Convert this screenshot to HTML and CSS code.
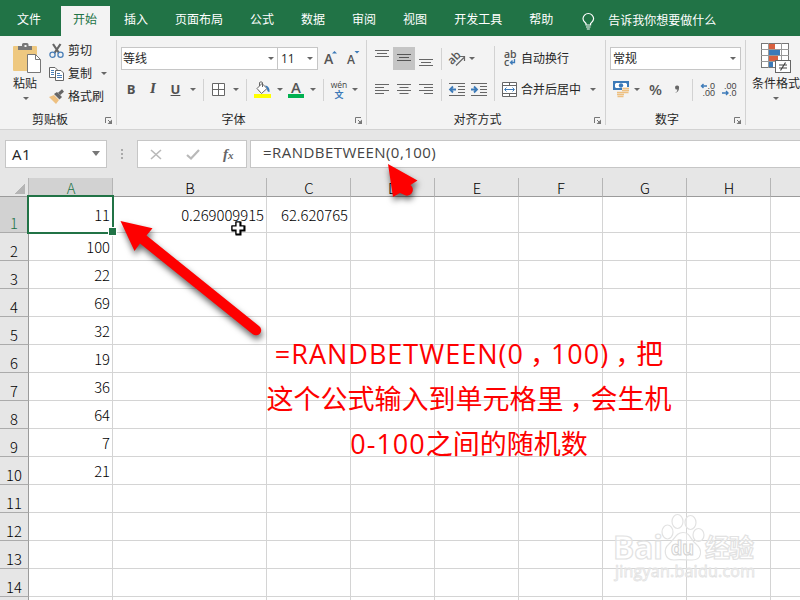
FILE: index.html
```html
<!DOCTYPE html>
<html lang="zh-CN">
<head>
    <meta charset="UTF-8">
    <meta name="viewport" content="width=device-width, initial-scale=1.0">
    <title>Excel RANDBETWEEN</title>
    <link rel="stylesheet" href="styles.css">
</head>
<body>
    <div class="window">
        <nav class="tabs">
            <a class="tab">文件</a>
            <a class="tab active">开始</a>
            <a class="tab">插入</a>
            <a class="tab">页面布局</a>
            <a class="tab">公式</a>
            <a class="tab">数据</a>
            <a class="tab">审阅</a>
            <a class="tab">视图</a>
            <a class="tab">开发工具</a>
            <a class="tab">帮助</a>
            <svg class="bulb" width="13" height="17" viewBox="0 0 13 17" fill="none" stroke="#fff" stroke-width="1.2">
                <path d="M4 12V10.500C2.500 9 1 8 1 5.800A5.200 5.200 0 0 1 11.600 5.800C11.600 8 10 9 8.600 10.500V12Z"/>
                <path d="M4 14H8.600M4.800 16H7.800"/>
            </svg>
            <span class="tell-me">告诉我你想要做什么</span>
        </nav>

        <div class="ribbon">
            <!-- Clipboard -->
            <section class="group clipboard">
                <div class="group-body">
                    <div class="big-button paste">
                        <svg width="29" height="31" viewBox="0 0 29 31">
                            <rect x="0" y="3" width="24" height="25" rx="1" fill="#eec880"/>
                            <path d="M5 7V3H9V1.500Q9 0 10.500 0H14Q15.500 0 15.500 1.500V3H19V7Z" fill="#777"/>
                            <rect x="11.500" y="2" width="2" height="2" fill="#f3f3f3"/>
                            <path d="M14.500 11.500H22.500L27.500 16.500V29.500H14.500Z" fill="#fff" stroke="#777"/>
                            <path d="M22.500 11.500V16.500H27.500" fill="none" stroke="#777"/>
                        </svg>
                        <span>粘贴</span>
                        <i class="caret"></i>
                    </div>
                    <div class="small-buttons">
                        <div class="small-button">
                            <svg width="16" height="16" viewBox="0 0 16 16" fill="none">
                                <path d="M4 1L10 10M11.500 1L5.500 10" stroke="#666" stroke-width="2.200"/>
                                <circle cx="3.500" cy="11.800" r="2.600" stroke="#4a7fb8" stroke-width="1.300"/>
                                <circle cx="11.500" cy="11.800" r="2.600" stroke="#4a7fb8" stroke-width="1.300"/>
                            </svg>
                            <span>剪切</span>
                        </div>
                        <div class="small-button">
                            <svg width="16" height="16" viewBox="0 0 16 16">
                                <path d="M.5 1.500H6L8.500 4V11.500H.5Z" fill="#fff" stroke="#666"/>
                                <path d="M2 4.500H5M2 6.500H5M2 8.500H5" stroke="#4a7fb8"/>
                                <path d="M6.500 4.500H12L14.500 7V14.500H6.500Z" fill="#fff" stroke="#666"/>
                                <path d="M8 7.500H11M8 9.500H13M8 11.500H13" stroke="#4a7fb8"/>
                            </svg>
                            <span>复制</span>
                            <i class="caret"></i>
                        </div>
                        <div class="small-button">
                            <svg width="16" height="16" viewBox="0 0 16 16">
                                <path d="M0 8L5 6L10 11L7 15Z" fill="#eec080"/>
                                <path d="M5 5L8 3L13 8L10.500 10.500Z" fill="#666"/>
                                <path d="M10 5L14 1.500" stroke="#666" stroke-width="3"/>
                            </svg>
                            <span>格式刷</span>
                        </div>
                    </div>
                </div>
                <div class="group-footer">
                    <span>剪贴板</span>
                    <svg class="launcher" width="8" height="8" viewBox="0 0 8 8"><path d="M.5 6V.5H6M3 3L6 6" fill="none" stroke="#777"/><path d="M7 2.500V7H2.500Z" fill="#777"/></svg>
                </div>
            </section>

            <!-- Font -->
            <section class="group font">
                <div class="group-body">
                    <div class="row">
                        <div class="combo font-name"><span>等线</span><i class="caret"></i></div>
                        <div class="combo font-size"><span>11</span><i class="caret"></i></div>
                        <svg class="grow" width="14" height="15" viewBox="0 0 14 15">
                            <text x="0" y="13.500" font-size="14" class="letter">A</text>
                            <path d="M8 3.500L10.500 1L13 3.500Z" fill="#3c7ab8"/>
                        </svg>
                        <svg class="shrink" width="14" height="15" viewBox="0 0 14 15">
                            <text x="0" y="13.500" font-size="12" class="letter">A</text>
                            <path d="M7.500 1H12.500L10 3.500Z" fill="#3c7ab8"/>
                        </svg>
                    </div>
                    <div class="font-tools">
                        <b class="fmt">B</b>
                        <b class="fmt italic">I</b>
                        <b class="fmt underline">U</b>
                        <i class="caret"></i>
                        <i class="sep"></i>
                        <svg width="13" height="13" viewBox="0 0 13 13"><path d="M.5 .5H12.500V12.500H.5ZM6.500 .5V12.500M.5 6.500H12.500" fill="#fff" stroke="#666"/></svg>
                        <i class="caret"></i>
                        <i class="sep"></i>
                        <svg width="17" height="17" viewBox="0 0 17 17">
                            <path d="M3 7.500L8 2.500L13 7.500L7.500 12.500Z" fill="#fff" stroke="#666"/>
                            <path d="M5.500 5V1.500Q7 0 8.500 1.500V6" fill="none" stroke="#666"/>
                            <path d="M11 4.500Q16 5 15.500 11Q13 11 13 7.500Z" fill="#3c7ab8"/>
                            <rect x="0" y="13" width="17" height="4" fill="#ff0"/>
                        </svg>
                        <i class="caret"></i>
                        <svg width="16" height="17" viewBox="0 0 16 17">
                            <text x="8" y="12" font-size="15" text-anchor="middle" class="letter">A</text>
                            <rect x="0" y="13" width="16" height="4" fill="#00b050"/>
                        </svg>
                        <i class="caret"></i>
                        <i class="sep"></i>
                        <svg width="18" height="20" viewBox="0 0 18 20">
                            <text x="9" y="8" font-size="8.500" text-anchor="middle" fill="#444">wén</text>
                            <text x="9" y="18" font-size="9" text-anchor="middle" class="blue">文</text>
                        </svg>
                        <i class="caret"></i>
                    </div>
                </div>
                <div class="group-footer">
                    <span>字体</span>
                    <svg class="launcher" width="8" height="8" viewBox="0 0 8 8"><path d="M.5 6V.5H6M3 3L6 6" fill="none" stroke="#777"/><path d="M7 2.500V7H2.500Z" fill="#777"/></svg>
                </div>
            </section>

            <!-- Alignment -->
            <section class="group alignment">
                <div class="group-body">
                    <div class="align-tools">
                        <svg width="14" height="23" viewBox="0 0 14 23"><path d="M0 3.500H14M2 6.500H12M0 9.500H14" stroke="#666"/></svg>
                        <div class="pressed"><svg width="14" height="23" viewBox="0 0 14 23"><path d="M0 7.500H14M2 10.500H12M0 13.500H14" stroke="#555"/></svg></div>
                        <svg width="14" height="23" viewBox="0 0 14 23"><path d="M0 12.500H14M2 15.500H12M0 18.500H14" stroke="#666"/></svg>
                        <i class="sep"></i>
                        <svg width="17" height="17" viewBox="0 0 17 17">
                            <text x="-1" y="12" font-size="11.500" class="letter" transform="rotate(-45 5 9)">ab</text>
                            <path d="M7 15.500L15 7.500M11 6.500H15.500V11" fill="none" stroke="#666" stroke-width="1.200"/>
                        </svg>
                        <i class="caret orient-caret"></i>

                        <svg width="14" height="14" viewBox="0 0 14 14"><path d="M0 1.500H14M0 4.500H9M0 7.500H14M0 10.500H9" stroke="#666"/></svg>
                        <svg width="14" height="14" viewBox="0 0 14 14"><path d="M0 1.500H14M2.500 4.500H11.500M0 7.500H14M2.500 10.500H11.500" stroke="#666"/></svg>
                        <svg width="14" height="14" viewBox="0 0 14 14"><path d="M0 1.500H14M5 4.500H14M0 7.500H14M5 10.500H14" stroke="#666"/></svg>
                        <i class="sep"></i>
                        <svg width="16" height="14" viewBox="0 0 16 14"><path d="M0 .5H16M9 3.500H16M9 6.500H16M9 9.500H16M0 12.500H16" stroke="#666"/><path d="M7 6.500H2M4 3.500L1 6.500L4 9.500" fill="none" stroke="#3c7ab8" stroke-width="1.800"/></svg>
                        <svg width="16" height="14" viewBox="0 0 16 14"><path d="M0 .5H16M9 3.500H16M9 6.500H16M9 9.500H16M0 12.500H16" stroke="#666"/><path d="M0 6.500H5M3 3.500L6 6.500L3 9.500" fill="none" stroke="#3c7ab8" stroke-width="1.800"/></svg>
                    </div>
                    <i class="sep tall"></i>
                    <div class="wrap-tools">
                        <div class="small-button">
                            <svg width="16" height="17" viewBox="0 0 16 17">
                                <text x="2" y="8" font-size="10.500" class="letter">ab</text>
                                <text x="2" y="16" font-size="10.500" class="letter">c</text>
                                <path d="M12.500 9V12.500H9M10.500 10.500L8.500 12.500L10.500 14.500" fill="none" stroke="#3c7ab8" stroke-width="1.300"/>
                            </svg>
                            <span>自动换行</span>
                        </div>
                        <div class="small-button">
                            <svg width="16" height="15" viewBox="0 0 16 15">
                                <path d="M.5 .5H14.500V14.500H.5ZM7.500 .5V3.500M7.500 11.500V14.500M.5 3.500H14.500M.5 11.500H14.500" fill="#fff" stroke="#666"/>
                                <path d="M3 7.500H12M4.500 5.500L2.500 7.500L4.500 9.500M10.500 5.500L12.500 7.500L10.500 9.500" fill="none" stroke="#3c7ab8"/>
                            </svg>
                            <span>合并后居中</span>
                            <i class="caret"></i>
                        </div>
                    </div>
                </div>
                <div class="group-footer">
                    <span>对齐方式</span>
                    <svg class="launcher" width="8" height="8" viewBox="0 0 8 8"><path d="M.5 6V.5H6M3 3L6 6" fill="none" stroke="#777"/><path d="M7 2.500V7H2.500Z" fill="#777"/></svg>
                </div>
            </section>

            <!-- Number -->
            <section class="group number">
                <div class="group-body">
                    <div class="combo"><span>常规</span><i class="caret"></i></div>
                    <div class="number-tools">
                        <svg width="17" height="17" viewBox="0 0 17 17">
                            <path d="M1 1H15V8H1Z" fill="#fff" stroke="#3c7ab8" stroke-width="2"/>
                            <path d="M1 1H4L1 4ZM15 1H12L15 4ZM1 8H4L1 5Z" fill="#3c7ab8"/>
                            <circle cx="8" cy="4.500" r="2.200" fill="#3c7ab8"/>
                            <path d="M9 7.500H16M9 9.500H16M9 11.500H16M4 11.500H10M4 13.500H11M4 15.500H11" stroke="#f3f3f3" stroke-width="3"/>
                            <path d="M9.500 7.500H16M9 9.500H16M9 11.500H15.500M4 11.500H10M4 13.500H11M4.500 15.500H10.500" stroke="#eec080" stroke-width="1.400"/>
                        </svg>
                        <i class="caret"></i>
                        <span class="percent">%</span>
                        <svg width="6" height="9" viewBox="0 0 6 9"><path d="M1 8Q3.500 6.500 3.500 4.500A2 2 0 1 1 5 3Q5 7 1 8Z" fill="#666"/></svg>
                        <i class="sep"></i>
                        <svg width="16" height="15" viewBox="0 0 16 15">
                            <text x="15" y="7" font-size="9" text-anchor="end" class="digits">.0</text>
                            <text x="15" y="14" font-size="9" text-anchor="end" class="digits">.00</text>
                            <path d="M7 4H1.500M3.500 2L1.500 4L3.500 6" fill="none" stroke="#3c7ab8" stroke-width="1.400"/>
                        </svg>
                        <svg width="16" height="15" viewBox="0 0 16 15">
                            <text x="15.500" y="7" font-size="9" text-anchor="end" class="digits">.00</text>
                            <text x="15.500" y="14" font-size="9" text-anchor="end" class="digits">.0</text>
                            <path d="M1 11H7M5 9L7 11L5 13" fill="none" stroke="#3c7ab8" stroke-width="1.400"/>
                        </svg>
                    </div>
                </div>
                <div class="group-footer">
                    <span>数字</span>
                    <svg class="launcher" width="8" height="8" viewBox="0 0 8 8"><path d="M.5 6V.5H6M3 3L6 6" fill="none" stroke="#777"/><path d="M7 2.500V7H2.500Z" fill="#777"/></svg>
                </div>
            </section>

            <!-- Styles -->
            <section class="group styles">
                <div class="group-body">
                    <div class="big-button">
                        <svg width="30" height="31" viewBox="0 0 30 31">
                            <rect x=".5" y=".5" width="27" height="24" fill="#fff" stroke="#777"/>
                            <path d="M7.500 0V25M20.500 0V25M0 6.500H28M0 12.500H28M0 18.500H28" stroke="#999"/>
                            <rect x="8" y="1" width="6" height="5" fill="#d9603f"/>
                            <rect x="8" y="7" width="11" height="5" fill="#3c7ab8"/>
                            <rect x="8" y="13" width="9" height="5" fill="#d9603f"/>
                            <rect x="8" y="19" width="4" height="5" fill="#3c7ab8"/>
                            <rect x="14.500" y="17.500" width="15" height="12" fill="#fff" stroke="#666"/>
                            <path d="M18 22H26M18 25H26M24.500 19.500L19.500 27.500" stroke="#444" stroke-width="1.200"/>
                        </svg>
                        <span>条件格式</span>
                        <i class="caret"></i>
                    </div>
                </div>
            </section>
        </div>

        <div class="formula-bar">
            <div class="name-box"><span>A1</span><i class="caret"></i></div>
            <svg class="dots" width="2" height="11" viewBox="0 0 2 11" fill="#aaa"><path d="M0 0H2V2H0ZM0 4H2V6H0ZM0 8H2V10H0Z"/></svg>
            <div class="fx-buttons">
                <svg width="12" height="11" viewBox="0 0 12 11"><path d="M1 1L11 10M11 1L1 10" stroke="#b9b9b9" stroke-width="1.600"/></svg>
                <svg width="14" height="11" viewBox="0 0 14 11"><path d="M1 6L5 9.500L13 1" fill="none" stroke="#b9b9b9" stroke-width="2.200"/></svg>
                <span class="fx">f<small>x</small></span>
            </div>
            <div class="formula">=RANDBETWEEN(0,100)</div>
        </div>

        <div class="sheet">
            <table>
                <colgroup>
                    <col class="col-head"><col class="col"><col class="col-wide">
                    <col class="col"><col class="col"><col class="col"><col class="col"><col class="col"><col class="col"><col class="col">
                </colgroup>
                <thead>
                    <tr><th class="corner"></th><th class="selected">A</th><th>B</th><th>C</th><th>D</th><th>E</th><th>F</th><th>G</th><th>H</th><th></th></tr>
                </thead>
                <tbody>
                    <tr class="first"><th class="selected">1</th><td>11</td><td>0.269009915</td><td>62.620765</td><td></td><td></td><td></td><td></td><td></td><td></td></tr>
                    <tr><th>2</th><td>100</td><td></td><td></td><td></td><td></td><td></td><td></td><td></td><td></td></tr>
                    <tr><th>3</th><td>22</td><td></td><td></td><td></td><td></td><td></td><td></td><td></td><td></td></tr>
                    <tr><th>4</th><td>69</td><td></td><td></td><td></td><td></td><td></td><td></td><td></td><td></td></tr>
                    <tr><th>5</th><td>32</td><td></td><td></td><td></td><td></td><td></td><td></td><td></td><td></td></tr>
                    <tr><th>6</th><td>19</td><td></td><td></td><td></td><td></td><td></td><td></td><td></td><td></td></tr>
                    <tr><th>7</th><td>36</td><td></td><td></td><td></td><td></td><td></td><td></td><td></td><td></td></tr>
                    <tr><th>8</th><td>64</td><td></td><td></td><td></td><td></td><td></td><td></td><td></td><td></td></tr>
                    <tr><th>9</th><td>7</td><td></td><td></td><td></td><td></td><td></td><td></td><td></td><td></td></tr>
                    <tr><th>10</th><td>21</td><td></td><td></td><td></td><td></td><td></td><td></td><td></td><td></td></tr>
                    <tr><th>11</th><td></td><td></td><td></td><td></td><td></td><td></td><td></td><td></td><td></td></tr>
                    <tr><th>12</th><td></td><td></td><td></td><td></td><td></td><td></td><td></td><td></td><td></td></tr>
                    <tr><th>13</th><td></td><td></td><td></td><td></td><td></td><td></td><td></td><td></td><td></td></tr>
                    <tr><th>14</th><td></td><td></td><td></td><td></td><td></td><td></td><td></td><td></td><td></td></tr>
                    <tr><th></th><td></td><td></td><td></td><td></td><td></td><td></td><td></td><td></td><td></td></tr>
                </tbody>
            </table>
            <div class="selection"></div>
        </div>

        <!-- arrows, mouse cursor and watermark lie over the sheet -->
        <svg class="overlay" width="800" height="600" viewBox="0 0 800 600">
            <g class="arrow">
                <path d="M120.500 221L152.500 228.300L146.500 235.500L259.300 326.200A5 5 0 0 1 252.800 334.200L140 243.500L134.500 251Z"/>
                <path d="M388 164L417.500 180.500L410.500 185A5.300 5.300 0 0 1 403.500 194.500L400 193L393 197Z"/>
            </g>
            <path d="M235.500 221.500H241.500V225.500H245.500V231.500H241.500V235.500H235.500V231.500H231.500V225.500H235.500Z" fill="#000"/>
            <path d="M236 222H240V226H244V230H240V234H236V230H232V226H236Z" fill="#fff" stroke="#000" stroke-width="1.200"/>
            <g class="watermark">
                <ellipse cx="667.500" cy="532" rx="5.500" ry="7"/>
                <ellipse cx="677.500" cy="521.500" rx="5.500" ry="7"/>
                <ellipse cx="690.500" cy="522.500" rx="5.500" ry="7"/>
                <ellipse cx="698.500" cy="535" rx="5.500" ry="6.500"/>
                <path d="M683 532.500C690 532.500 690 539 696 544C703 550 702 560 692 560C687 560 679 559 674 560C664 560 663 549 669 544C675 539 676 532.500 683 532.500Z"/>
                <text x="613" y="559" class="wm-baidu" textLength="50" lengthAdjust="spacingAndGlyphs">Bai</text>
                <text x="671" y="555" class="wm-du" textLength="23" lengthAdjust="spacingAndGlyphs">du</text>
                <text x="705" y="557" class="wm-cjk" textLength="49">经验</text>
                <text x="615" y="577" class="wm-url" textLength="140">jingyan.baidu.com</text>
            </g>
        </svg>

        <div class="note">
            <p><span>=RANDBETWEEN(0</span><i>，</i><span>100)</span><i>，</i>把</p>
            <p>这个公式输入到单元格里<i>，</i>会生机</p>
            <p><span>0-100</span>之间的随机数</p>
        </div>
    </div>
</body>
</html>
```

FILE: styles.css
```css
* {
    box-sizing: border-box;
}

body {
    margin: 0;
    width: 800px;
    height: 600px;
    overflow: hidden;
    font-family: "Open Sans", "Noto Sans CJK SC", sans-serif;
    font-size: 12px;
    line-height: 16px;
    color: #262626;
}

svg {
    display: block;
    flex: none;
    overflow: visible;
}

.window {
    position: relative;
    width: 800px;
    height: 600px;
    overflow: hidden;
    background: #e6e6e6;
}

/* tabs */
.tabs {
    display: flex;
    height: 36px;
    padding: 6px 0 0 4px;
    background: #217346;
    color: #fff;
}

.tab {
    padding: 6px 13px 0;
    white-space: nowrap;
}

.tab:first-child {
    padding-right: 20px;
}

.tab.active {
    padding: 6px 13px 0 12px;
    background: #f3f3f3;
    color: #217346;
}

.tab.active + .tab {
    padding-left: 14px;
}

.tab + .tab:nth-child(n + 4) {
    padding-left: 14px;
}

.bulb {
    margin: 7px 0 0 16px;
}

.tell-me {
    margin: 7px 0 0 13px;
    white-space: nowrap;
}

/* ribbon */
.ribbon {
    display: flex;
    height: 94px;
    background: #f3f3f3;
    border-bottom: 1px solid #d2d2d2;
}

.group {
    position: relative;
    display: flex;
    flex-direction: column;
    flex: none;
    height: 93px;
    padding-top: 11px;
}

.group::after {
    content: "";
    position: absolute;
    right: 0;
    top: 4px;
    bottom: 4px;
    width: 1px;
    background: #d2d2d2;
}

.group-body {
    flex: none;
    height: 64px;
}

.group-footer {
    display: flex;
    flex: none;
    align-items: center;
    height: 18px;
    padding-right: 4px;
    text-align: center;
}

.group-footer span {
    flex: 1;
    padding-right: 5px;
}

.launcher {
    margin-top: 2px;
}

.clipboard {
    width: 117px;
}

.clipboard .group-body {
    display: flex;
}

.font {
    width: 250px;
    padding-left: 4px;
}

.font .group-footer span {
    padding-right: 9px;
}

.alignment {
    width: 239px;
    padding-left: 4px;
}

.alignment .group-body {
    display: flex;
}

.alignment .group-footer span,
.number .group-footer span {
    padding-right: 10px;
}

.number {
    width: 140px;
    padding-left: 4px;
}

.styles {
    width: 66px;
}

.styles::after {
    display: none;
}

.caret {
    flex: none;
    width: 0;
    height: 0;
    border: 3px solid transparent;
    border-top-color: #666;
    border-bottom: 0;
}

.sep {
    width: 1px;
    height: 22px;
    background: #d2d2d2;
}

.sep.tall {
    height: 55px;
    margin: -1px 7px 0 4px;
}

.big-button {
    display: flex;
    flex-direction: column;
    align-items: center;
    width: 60px;
    margin-top: -4px;
    white-space: nowrap;
}

.big-button span {
    margin: 2px 0 5px;
}

.paste {
    width: 26px;
    margin-left: 12px;
}

.paste svg {
    margin-left: 4px;
}

.paste .caret {
    margin-left: 2px;
}

.small-buttons {
    margin: -8px 0 0 11px;
}

.small-button {
    display: flex;
    align-items: center;
    height: 23px;
    white-space: nowrap;
}

.small-button svg {
    margin-right: 3px;
}

.small-button .caret {
    margin-left: 9px;
}

.row {
    display: flex;
}

.combo {
    display: flex;
    align-items: center;
    justify-content: space-between;
    height: 23px;
    padding: 0 3px 0 1px;
    background: #fff;
    border: 1px solid #c6c6c6;
}

.font-name {
    width: 157px;
}

.font-size {
    width: 41px;
    margin-left: -1px;
    padding-right: 4px;
    padding-left: 3px;
}

.grow {
    margin: 3px 0 0 6px;
}

.shrink {
    margin: 3px 0 0 9px;
}

.letter {
    fill: #555;
    font-weight: 600;
}

.digits {
    fill: #444;
    font-family: "Liberation Sans", sans-serif;
}

.blue {
    fill: #3c7ab8;
    font-weight: bold;
}

.font-tools,
.number-tools {
    display: grid;
    align-items: center;
    justify-items: center;
    height: 23px;
    margin-top: 8px;
}

.font-tools {
    grid-template-columns: 20px 24px 21px 13px 9px 21px 13px 9px 23px 11px 22px 11px 11px 20px 12px;
}

.fmt {
    margin-top: -2px;
    font-size: 13px;
    line-height: 18px;
    color: #505050;
}

.italic {
    font-family: "DejaVu Serif", serif;
    font-size: 12px;
    font-style: italic;
    font-weight: bold;
}

.underline {
    text-decoration: underline;
}

.align-tools {
    display: grid;
    grid-template-columns: 22px 22px 22px 9px 22px 22px;
    grid-template-rows: 23px 23px;
    row-gap: 8px;
    align-items: center;
    justify-items: center;
    height: 54px;
}

.pressed {
    display: flex;
    justify-content: center;
    width: 22px;
    height: 23px;
    background: #c5c5c5;
}

.orient-caret {
    justify-self: start;
    margin-left: 1px;
}

.wrap-tools {
    display: flex;
    flex-direction: column;
    gap: 8px;
}

.number .combo {
    width: 131px;
    padding-left: 2px;
}

.number .caret {
    margin-right: 1px;
}

.number-tools {
    grid-template-columns: 22px 10px 27px 15px 16px 15px 27px;
}

.percent {
    margin-top: -2px;
    font-size: 15px;
    font-weight: 600;
    color: #555;
}

/* formula bar */
.formula-bar {
    display: flex;
    align-items: center;
    height: 48px;
    padding-left: 5px;
}

.name-box,
.fx-buttons,
.formula {
    display: flex;
    align-items: center;
    height: 28px;
    background: #fff;
    border: 1px solid #c6c6c6;
}

.name-box {
    width: 102px;
    justify-content: space-between;
    padding: 0 6px 1px;
    font-size: 15px;
    letter-spacing: 0.5px;
    color: #222;
}

.name-box .caret {
    border-width: 5px 4px 0;
    border-top-color: #777;
}

.dots {
    margin: 0 14px 0 14px;
}

.fx-buttons {
    width: 110px;
    padding-left: 12px;
}

.fx-buttons svg + svg {
    margin-left: 24px;
}

.fx {
    margin-left: 23px;
    font: italic bold 15px/16px "Liberation Serif", serif;
    color: #666;
}

.fx small {
    font-size: 11px;
}

.formula {
    flex: 1;
    margin-left: 3px;
    padding-left: 12px;
    padding-bottom: 4px;
    border-right: 0;
    font-size: 15px;
    letter-spacing: 0.45px;
    color: #444;
}

/* sheet */
.sheet {
    position: relative;
    height: 422px;
    overflow: hidden;
}

table {
    width: 855px;
    table-layout: fixed;
    border-collapse: separate;
    border-spacing: 0;
    font-family: "Noto Sans CJK SC", sans-serif;
    font-size: 14.8px;
    line-height: 18px;
    font-weight: 300;
    color: #000;
}

.col-head {
    width: 29px;
}

.col {
    width: 84px;
}

.col-wide {
    width: 154px;
}

th,
td {
    height: 28px;
    padding: 0;
    border-right: 1px solid #d4d4d4;
    border-bottom: 1px solid #d4d4d4;
}

td {
    padding-right: 2px;
    background: #fff;
    text-align: right;
}

th {
    background: #e6e6e6;
    border-bottom-color: #ababab;
    font-weight: 300;
    text-align: center;
}

thead th {
    height: 19px;
    padding-top: 2px;
    padding-left: 1px;
    line-height: 16px;
    border-right-color: #b5b5b5;
    border-bottom-color: #9b9b9b;
}

tbody th {
    padding-top: 9px;
    line-height: 20px;
    vertical-align: top;
    border-right-color: #9b9b9b;
}

.first th,
.first td {
    height: 36px;
}

.first th {
    padding-top: 17px;
}

tbody th:first-child {
    padding-bottom: 0;
    height: 28px;
    padding-top: 8px;
    line-height: 19px;
}

tbody .first th:first-child {
    height: 36px;
    padding-top: 16px;
}

th.selected {
    background: #d2d2d2;
    color: #217346;
}

.corner {
    background: linear-gradient(135deg, transparent 50%, #b5b5b5 50%) 14px 5px / 11px 11px no-repeat #e6e6e6;
}

.selection {
    position: absolute;
    left: 27px;
    top: 17px;
    width: 87px;
    height: 39px;
    border: 2px solid #217346;
}

.selection::after {
    content: "";
    position: absolute;
    right: -5px;
    bottom: -4px;
    width: 7px;
    height: 7px;
    background: #217346;
    border: 1px solid #fff;
}

/* annotations */
.overlay {
    position: absolute;
    left: 0;
    top: 0;
}

.arrow {
    fill: #fe0000;
    filter: drop-shadow(1px 4px 3px rgba(0, 0, 0, 0.6));
}

.watermark {
    fill: #fff;
    fill-opacity: 0.4;
    stroke: #e2e2e2;
    stroke-width: 1.2;
}

.wm-baidu {
    font: bold 32px "Open Sans", sans-serif;
}

.wm-du {
    font: bold 20px "Open Sans", sans-serif;
    stroke: #d4d4d4;
}

.wm-cjk {
    font: bold 25px "Noto Sans CJK SC", sans-serif;
}

.wm-url {
    font: 16px "Open Sans", sans-serif;
    stroke-width: 0.8;
}

.note {
    position: absolute;
    left: 260px;
    top: 331px;
    width: 418px;
    font-size: 27px;
    line-height: 45px;
    color: #fe0000;
    text-align: center;
    white-space: nowrap;
}

.note p {
    margin: 0;
}

.note span {
    letter-spacing: 1px;
}

.note i {
    position: relative;
    left: 6px;
    font-style: normal;
}
```
